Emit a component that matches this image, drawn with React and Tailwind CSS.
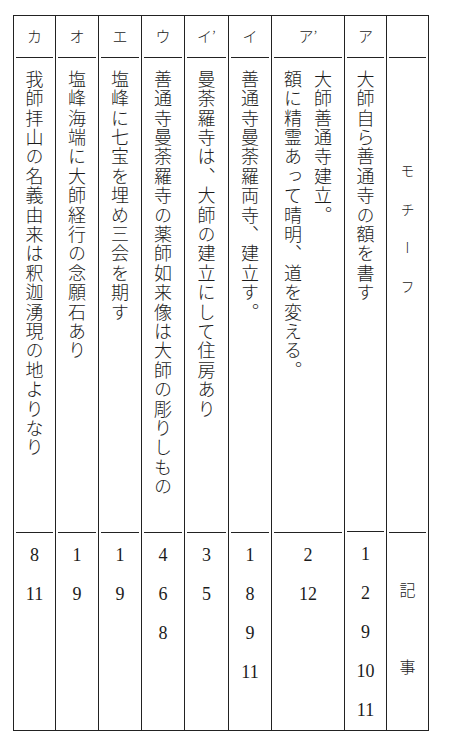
const cols = [
  { head: 'カ', w: 'w-[42px]', lines: ['我師拝山の名義由来は釈迦湧現の地よりなり'], nums: ['8', '11'] },
  { head: 'オ', w: 'w-[43px]', lines: ['塩峰海端に大師経行の念願石あり'], nums: ['1', '9'] },
  { head: 'エ', w: 'w-[43px]', lines: ['塩峰に七宝を埋め三会を期す'], nums: ['1', '9'] },
  { head: 'ウ', w: 'w-[43px]', lines: ['善通寺曼荼羅寺の薬師如来像は大師の彫りしもの'], nums: ['4', '6', '8'] },
  { head: 'イ’', w: 'w-[44px]', lines: ['曼荼羅寺は、大師の建立にして住房あり'], nums: ['3', '5'] },
  { head: 'イ', w: 'w-[43px]', lines: ['善通寺曼荼羅両寺、建立す。'], nums: ['1', '8', '9', '11'] },
  { head: 'ア’', w: 'w-[73px]', lines: ['大師善通寺建立。', '額に精霊あって晴明、道を変える。'], nums: ['2', '12'] },
  { head: 'ア', w: 'w-[42px]', lines: ['大師自ら善通寺の額を書す'], nums: ['1', '2', '9', '10', '11'] },
]

const jp = "font-['Noto_Sans_CJK_JP',sans-serif] font-light"

function Rule() {
  return <div className="mx-[2px] border-t border-[#222]" />
}

function Column({ col }) {
  return (
    <div className={`${col.w} flex flex-col border-r border-[#222]`}>
      <div className={`h-[41px] flex items-center justify-center text-[15px] text-[#1c1c1c] ${jp}`}>
        {col.head}
      </div>
      <Rule />
      <div className="h-[474px] flex justify-center pt-[12px]">
        <div className={`[writing-mode:vertical-rl] text-[18px] leading-[30px] tracking-[1.4px] text-[#1c1c1c] ${jp}`}>
          {col.lines.map((l, i) => (
            <div key={i}>{l}</div>
          ))}
        </div>
      </div>
      <Rule />
      <div className="flex-1 flex flex-col items-center pt-[3px] font-['Liberation_Serif',serif] text-[18px] leading-[39px] text-[#1c1c1c]">
        {col.nums.map((n, i) => (
          <div key={i}>{n}</div>
        ))}
      </div>
    </div>
  )
}

export default function App() {
  return (
    <div className="w-[450px] h-[744px] bg-white pl-[13px] pt-[15px]">
      <div className="w-[416px] h-[716px] flex border-l border-t-[1.5px] border-b-[1.5px] border-[#222]">
        {cols.map((c, i) => (
          <Column key={i} col={c} />
        ))}
        {/* header column */}
        <div className="w-[42px] flex flex-col border-r border-[#222]">
          <div className="h-[41px]" />
          <Rule />
          <div className="h-[474px] flex justify-center pt-[106px]">
            <div className={`[writing-mode:vertical-rl] text-[14px] leading-[20px] tracking-[24.5px] text-[#1c1c1c] ${jp}`}>
              モチーフ
            </div>
          </div>
          <Rule />
          <div className={`flex-1 flex flex-col items-center justify-center gap-[53px] pb-[9px] text-[16px] leading-[24px] text-[#1c1c1c] ${jp}`}>
            <div>記</div>
            <div>事</div>
          </div>
        </div>
      </div>
    </div>
  )
}
